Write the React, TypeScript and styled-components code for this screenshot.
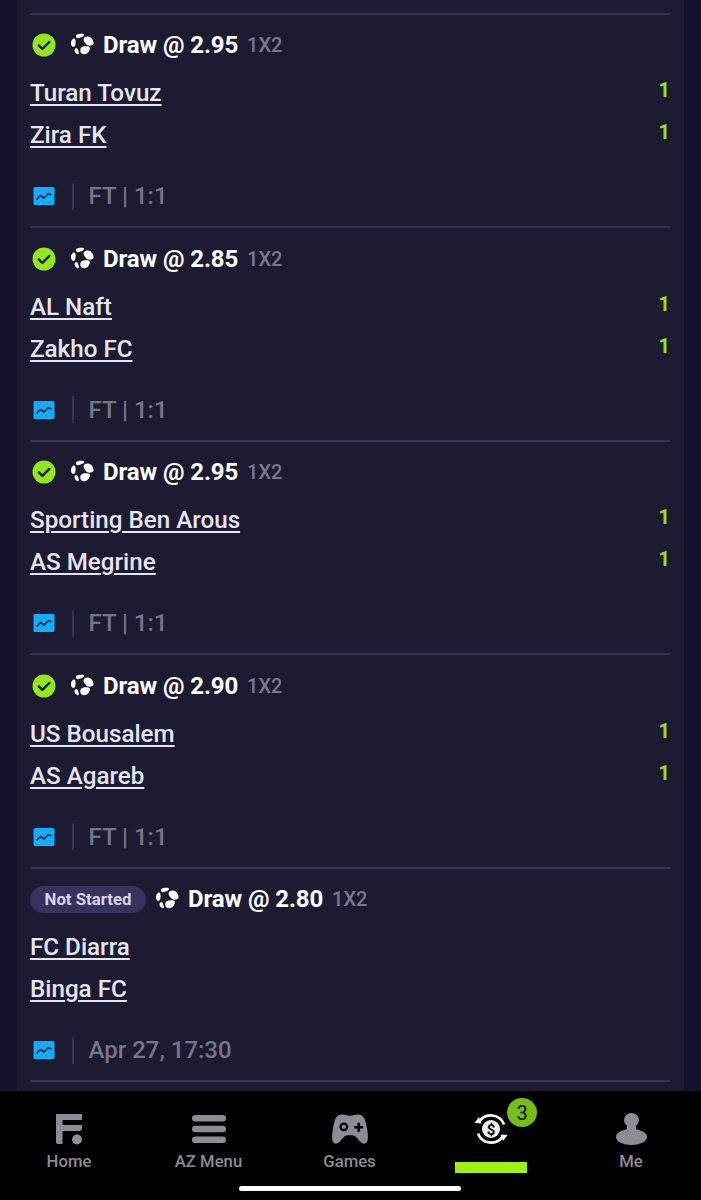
import React from "react";
import styled, { createGlobalStyle } from "styled-components";

const GlobalStyle = createGlobalStyle`
  html, body {
    margin: 0;
    padding: 0;
    background: #000;
    font-family: Roboto, "Liberation Sans", sans-serif;
  }
`;

const Page = styled.div`
  width: 701px;
  height: 1200px;
  overflow: hidden;
  display: flex;
  flex-direction: column;
  background: #14112d;
`;

const Card = styled.div`
  flex: 1;
  min-height: 0;
  overflow: hidden;
  margin: 0 17px;
  padding: 12.5px 14px 0 13px;
  background: #1c1b32;
`;

const Bet = styled.div`
  height: 213.5px;
  box-sizing: border-box;
  border-top: 2px solid #35325a;
  padding-top: 15.5px;
  display: flex;
  flex-direction: column;
`;

const BetHead = styled.div`
  display: flex;
  align-items: center;
  height: 30px;
`;

const StatusPill = styled.span`
  display: inline-flex;
  align-items: center;
  justify-content: center;
  width: 116px;
  height: 27px;
  border-radius: 14px;
  background: #38325f;
  color: #d6d5e2;
  font-size: 16.8px;
  font-weight: 700;
  margin-right: 9px;
`;

const CheckWrap = styled.span`
  display: flex;
  width: 24px;
  height: 24px;
  margin-left: 2px;
  margin-right: 14px;
`;

const BallWrap = styled.span`
  display: flex;
  width: 24px;
  height: 24px;
  margin-right: 9px;
`;

const Pick = styled.span`
  color: #fff;
  font-size: 24px;
  font-weight: 700;
  letter-spacing: -0.1px;
`;

const Market = styled.span`
  color: #7a7989;
  font-size: 20px;
  font-weight: 500;
  margin-left: 9px;
`;

const Teams = styled.div`
  display: flex;
  flex-direction: column;
  gap: 10px;
  margin-top: 17px;
`;

const TeamRow = styled.div`
  display: flex;
  justify-content: space-between;
  height: 32px;
`;

const TeamName = styled.a`
  color: #e7e6f0;
  font-size: 24.2px;
  font-weight: 500;
  line-height: 32px;
  text-decoration: underline;
  text-decoration-thickness: 2px;
  text-underline-offset: 3px;
`;

const Score = styled.span`
  color: #93e01b;
  font-size: 20px;
  font-weight: 700;
  line-height: 24px;
  margin-top: 1px;
`;

const BetFoot = styled.div`
  display: flex;
  align-items: center;
  margin-top: 31px;
  height: 28px;
`;

const ChartWrap = styled.span`
  display: flex;
  width: 22px;
  height: 20px;
  margin-left: 3px;
  margin-right: 17px;
`;

const FootRule = styled.span`
  width: 2px;
  height: 27px;
  background: #35325a;
  margin-right: 14.5px;
`;

const FootText = styled.span`
  color: #777685;
  font-size: 24px;
  font-weight: 500;
`;

const Nav = styled.nav`
  position: relative;
  flex: none;
  height: 109px;
  background: #000;
  display: grid;
  grid-template-columns: 138px 141px 141px 141px 140px;
`;

const NavItem = styled.div`
  position: relative;
  display: flex;
  flex-direction: column;
  align-items: center;
  padding-top: 16px;
`;

const NavIcon = styled.span`
  display: flex;
  align-items: center;
  justify-content: center;
  height: 44px;
`;

const NavLabel = styled.span`
  color: #8c8b96;
  font-size: 16.7px;
  font-weight: 500;
  line-height: 20px;
  margin-top: 1px;
`;

const ActiveBar = styled.span`
  width: 72px;
  height: 11px;
  background: #9bf40f;
  margin-top: 11px;
`;

const Badge = styled.span`
  position: absolute;
  top: 7px;
  left: 87px;
  width: 30px;
  height: 29px;
  border-radius: 50%;
  background: #78bd12;
  color: #0a0a0a;
  font-size: 20px;
  font-weight: 400;
  display: flex;
  align-items: center;
  justify-content: center;
`;

const HomeBar = styled.span`
  position: absolute;
  left: 239px;
  bottom: 9px;
  width: 222px;
  height: 5px;
  border-radius: 3px;
  background: #fff;
`;

const CheckIcon = () => (
  <svg width="24" height="24" viewBox="0 0 24 24">
    <circle cx="12" cy="12" r="11.5" fill="#93e81a" />
    <path d="M6.8 12.4l3.6 3.5 7-7" fill="none" stroke="#1d1c33" strokeWidth="2.4" strokeLinecap="round" strokeLinejoin="round" />
  </svg>
);

const BallIcon = () => (
  <svg width="24" height="24" viewBox="0 0 24 24" fill="#fff">
    <path d="M6.500 1.800C8.500.6 11.500.4 13.500 1c.8.400.6 1.600-.2 2.200-1.600 1-4 1.800-5.600 2-1.400 0-2.400-2.200-1.200-3.400z" />
    <path d="M14.500 4.500c1.600-1.200 4.500-1.200 6.200 0 1.800 1.400 3 4 2.800 6.200-.2 1.400-3.500 2.300-5.500 1.800-1.800-.5-3.600-3.200-4.300-5-.3-1.100 0-2.300.8-3z" />
    <path d="M3 5.800c.8-.6 2 0 2.300 1 .5 1.800.4 4-.2 6-.4 1.200-2.300 1.400-3.100.4C.5 11.500.5 8 3 5.800z" />
    <path d="M11.300 14.500c1.600-1.300 5.200-1.700 7.300-1 1.200.4 1.600 1.500 1.200 2.800-.5 1.800-1.800 3.700-3.500 4.500-1.600.6-3.800.4-5-.6-1.300-1.400-1.500-4.200 0-5.700z" />
    <path d="M5.800 15.300c.8-.4 1.800.2 2.100 1 .5 1.200.9 2.700 1 3.800.1 1-1 1.300-1.900.9-1.300-.7-2.400-2.300-2.500-3.800 0-.8.6-1.500 1.300-1.900z" />
  </svg>
);

const ChartIcon = () => (
  <svg width="22" height="20" viewBox="0 0 22 20">
    <rect x="0.5" y="1" width="21" height="18" rx="1.5" fill="#10aefc" />
    <path d="M3.5 13.5l4-4 3.5 2.5 4.5-4.5 3 1.5" fill="none" stroke="#17203f" strokeWidth="1.7" strokeLinejoin="round" />
  </svg>
);

const HomeIcon = () => (
  <svg width="28" height="32" viewBox="0 0 28 32" fill="#8c8b96">
    <path d="M1 1h26v6H7.500v5H27v3.500c0 1.400-1 2.500-2.500 2.500H7.500v13H3c-1.200 0-2-.8-2-2z" />
    <circle cx="22" cy="26.500" r="5" />
  </svg>
);

const MenuIcon = () => (
  <svg width="34" height="28" viewBox="0 0 34 28" fill="#8c8b96">
    <rect y="0" width="34" height="6.500" rx="3.200" />
    <rect y="10.700" width="34" height="6.500" rx="3.200" />
    <rect y="21.500" width="34" height="6.500" rx="3.200" />
  </svg>
);

const GamesIcon = () => (
  <svg width="36" height="30" viewBox="0 0 35 29">
    <path
      fill="#8c8b96"
      d="M9 .5C12 0 14 1.500 17.500 1.500S23 0 26 .5C30 1 32 4 33 9c1.500 6 2.500 13 1.500 17-1 3.500-4.500 3.500-7 1-2.500-3-4.500-6.500-8-6.500h-4c-3.500 0-5.500 3.500-8 6.500-2.500 2.500-6 2.500-7-1-1-4 0-11 1.500-17C3 4 5 1 9 .5z"
    />
    <circle cx="11.500" cy="12.500" r="3.200" fill="none" stroke="#000" strokeWidth="2.200" />
    <path d="M24.700 8.500h2.600v3h3v2.600h-3v3h-2.600v-3h-3v-2.600h3z" fill="#000" />
  </svg>
);

const BetsIcon = () => (
  <svg width="34" height="34" viewBox="0 0 34 34">
    <path d="M5 10A14 14 0 0 1 30 12.500" fill="none" stroke="#fff" strokeWidth="2.600" />
    <path d="M29 24A14 14 0 0 1 4 21.500" fill="none" stroke="#fff" strokeWidth="2.600" />
    <path d="M.5 11l7 .5L5 5z" fill="#fff" />
    <path d="M33.500 23l-7-.5L29 29z" fill="#fff" />
    <circle cx="17" cy="17" r="9" fill="#eeeef2" />
    <text x="17" y="22.500" textAnchor="middle" fontFamily="Roboto, sans-serif" fontSize="15" fontWeight="700" fill="#0a0a0a">$</text>
  </svg>
);

const MeIcon = () => (
  <svg width="31" height="32" viewBox="0 0 31 32" fill="#8c8b96">
    <ellipse cx="15.500" cy="7" rx="7.500" ry="7" />
    <rect x="11" y="10" width="9" height="8" />
    <ellipse cx="15.500" cy="24" rx="15.500" ry="8" />
  </svg>
);

type BetData = {
  odds: string;
  home: string;
  away: string;
  foot: string;
  finished: boolean;
};

const bets: BetData[] = [
  { odds: "2.95", home: "Turan Tovuz", away: "Zira FK", foot: "FT | 1:1", finished: true },
  { odds: "2.85", home: "AL Naft", away: "Zakho FC", foot: "FT | 1:1", finished: true },
  { odds: "2.95", home: "Sporting Ben Arous", away: "AS Megrine", foot: "FT | 1:1", finished: true },
  { odds: "2.90", home: "US Bousalem", away: "AS Agareb", foot: "FT | 1:1", finished: true },
  { odds: "2.80", home: "FC Diarra", away: "Binga FC", foot: "Apr 27, 17:30", finished: false },
];

export default function App() {
  return (
    <Page>
      <GlobalStyle />
      <Card>
        {bets.map((bet) => (
          <Bet key={bet.home}>
            <BetHead>
              {bet.finished ? (
                <CheckWrap>
                  <CheckIcon />
                </CheckWrap>
              ) : (
                <StatusPill>Not Started</StatusPill>
              )}
              <BallWrap>
                <BallIcon />
              </BallWrap>
              <Pick>Draw @ {bet.odds}</Pick>
              <Market>1X2</Market>
            </BetHead>
            <Teams>
              <TeamRow>
                <TeamName>{bet.home}</TeamName>
                {bet.finished && <Score>1</Score>}
              </TeamRow>
              <TeamRow>
                <TeamName>{bet.away}</TeamName>
                {bet.finished && <Score>1</Score>}
              </TeamRow>
            </Teams>
            <BetFoot>
              <ChartWrap>
                <ChartIcon />
              </ChartWrap>
              <FootRule />
              <FootText>{bet.foot}</FootText>
            </BetFoot>
          </Bet>
        ))}
        <Bet />
      </Card>
      <Nav>
        <NavItem>
          <NavIcon>
            <HomeIcon />
          </NavIcon>
          <NavLabel>Home</NavLabel>
        </NavItem>
        <NavItem>
          <NavIcon>
            <MenuIcon />
          </NavIcon>
          <NavLabel>AZ Menu</NavLabel>
        </NavItem>
        <NavItem>
          <NavIcon>
            <GamesIcon />
          </NavIcon>
          <NavLabel>Games</NavLabel>
        </NavItem>
        <NavItem>
          <NavIcon>
            <BetsIcon />
          </NavIcon>
          <Badge>3</Badge>
          <ActiveBar />
        </NavItem>
        <NavItem>
          <NavIcon>
            <MeIcon />
          </NavIcon>
          <NavLabel>Me</NavLabel>
        </NavItem>
        <HomeBar />
      </Nav>
    </Page>
  );
}
